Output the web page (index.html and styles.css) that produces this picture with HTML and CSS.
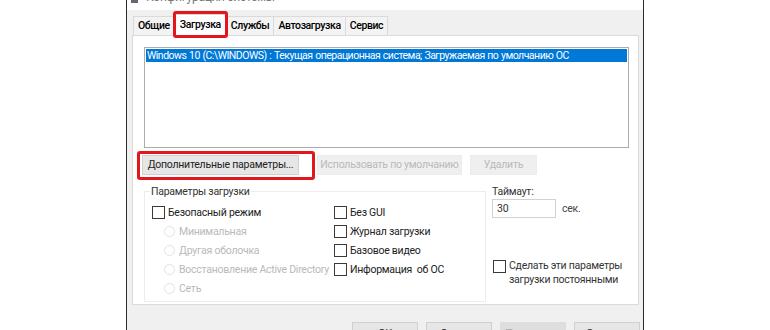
FILE: index.html
```html
<!DOCTYPE html>
<html lang="ru">
<head>
<meta charset="utf-8">
<title>Конфигурация системы</title>
<link rel="stylesheet" href="styles.css">
</head>
<body>
<div class="window">
  <div class="titlebar">
    <span class="ticon"></span>
    <span class="ttext">Конфигурация системы</span>
  </div>
  <div class="tabs">
    <div class="tab">Общие</div>
    <div class="tab active">Загрузка<span class="mark mark-tab"></span></div>
    <div class="tab">Службы</div>
    <div class="tab">Автозагрузка</div>
    <div class="tab">Сервис</div>
  </div>
  <div class="panel">
    <div class="listbox">
      <div class="selrow">Windows 10 (C:\WINDOWS) : Текущая операционная система; Загружаемая по умолчанию ОС</div>
    </div>
    <div class="btnrow">
      <div class="btn btn-adv">Дополнительные параметры...<span class="mark mark-btn"></span></div>
      <div class="btn btn-def disabled">Использовать по умолчанию</div>
      <div class="btn btn-del disabled">Удалить</div>
    </div>
    <div class="lower">
      <fieldset class="group">
        <legend>Параметры загрузки</legend>
        <div class="cols">
          <div class="col1">
            <div class="row"><span class="cb"></span><span>Безопасный режим</span></div>
            <div class="row sub disabled"><span class="rb"></span><span>Минимальная</span></div>
            <div class="row sub disabled"><span class="rb"></span><span>Другая оболочка</span></div>
            <div class="row sub disabled"><span class="rb"></span><span>Восстановление Active Directory</span></div>
            <div class="row sub disabled"><span class="rb"></span><span>Сеть</span></div>
          </div>
          <div class="col2">
            <div class="row"><span class="cb"></span><span>Без GUI</span></div>
            <div class="row"><span class="cb"></span><span>Журнал загрузки</span></div>
            <div class="row"><span class="cb"></span><span>Базовое видео</span></div>
            <div class="row"><span class="cb"></span><span>Информация&nbsp; об ОС</span></div>
          </div>
        </div>
      </fieldset>
      <div class="side">
        <div class="tlabel">Таймаут:</div>
        <div class="trow">
          <div class="tinput">30</div>
          <span class="sec">сек.</span>
        </div>
        <div class="perm">
          <span class="cb"></span>
          <span class="permtext">Сделать эти параметры<br>загрузки постоянными</span>
        </div>
      </div>
    </div>
  </div>
  <div class="footer">
    <div class="fbtn">OK</div>
    <div class="fbtn">Отмена</div>
    <div class="fbtn disabled-f">Применить</div>
    <div class="fbtn">Справка</div>
  </div>
</div>
</body>
</html>
```
FILE: styles.css
```css
* { box-sizing: border-box; }
html, body {
  margin: 0;
  background: #ffffff;
}
body {
  font-family: Roboto, "Liberation Sans", sans-serif;
  font-size: 10.5px;
  letter-spacing: -0.25px;
  color: #222;
}
.window {
  margin-left: 126px;
  width: 518px;
  height: 330px;
  border-left: 1px solid #2b2b2b;
  border-right: 1px solid #2b2b2b;
  background: #f0f0f0;
  overflow: hidden;
  display: flex;
  flex-direction: column;
}
.titlebar {
  height: 10px;
  background: #ffffff;
  overflow: hidden;
  display: flex;
  align-items: flex-end;
  gap: 8px;
  padding-left: 4px;
  flex-shrink: 0;
}
.ticon {
  width: 7px;
  height: 3px;
  background: #667;
  margin-bottom: 7px;
}
.ttext {
  font-size: 12px;
  line-height: 12px;
  color: #777;
  margin-bottom: 7px;
}
.tabs {
  height: 25px;
  display: flex;
  align-items: flex-end;
  padding-left: 6px;
  flex-shrink: 0;
}
.tab {
  position: relative;
  height: 19px;
  line-height: 18px;
  padding: 0 4px;
  border: 1px solid #dadada;
  border-bottom: none;
  margin-right: -1px;
  background: #f3f3f3;
  color: #000;
  font-size: 10.5px;
  font-weight: 500;
  letter-spacing: -0.4px;
}
.tab.active {
  height: 22px;
  line-height: 20px;
  background: #ffffff;
  margin-bottom: -1px;
  z-index: 2;
  padding: 0 5px;
}
.mark {
  position: absolute;
  border: 3px solid #e3161b;
  border-radius: 3px;
  pointer-events: none;
}
.mark-tab {
  left: -2px;
  right: -2px;
  top: -4px;
  bottom: -2px;
}
.panel {
  margin: 0 4px 0 5px;
  height: 270px;
  background: #ffffff;
  border: 1px solid #dadada;
  flex-shrink: 0;
  padding: 11px 9px 0 11px;
}
.listbox {
  height: 101px;
  border: 1px solid #acacac;
  padding: 1px;
}
.selrow {
  background: #0078d7;
  color: #ffffff;
  height: 13px;
  line-height: 13px;
  padding-left: 1px;
  font-size: 10.5px;
  letter-spacing: -0.5px;
  word-spacing: 0.5px;
  white-space: nowrap;
  overflow: hidden;
}
.btnrow {
  display: flex;
  margin-top: 7px;
}
.btn {
  position: relative;
  height: 20px;
  line-height: 18px;
  border: 1px solid #d0d0d0;
  background: #e6e6e6;
  text-align: center;
  color: #222;
  white-space: nowrap;
  flex-shrink: 0;
}
.btn-adv { width: 157px; margin-left: -2px; }
.btn-def { width: 145px; margin-left: 18px; }
.btn-del { width: 67px; margin-left: 8px; }
.btn.disabled {
  background: #efefef;
  border-color: #ececec;
  color: #b9b9b9;
}
.mark-btn {
  left: -6px;
  top: -5px;
  width: 178px;
  height: 29px;
}
.lower {
  display: flex;
  margin-top: 9px;
}
.group {
  margin: 0;
  width: 342px;
  min-width: 342px;
  flex-shrink: 0;
  height: 118px;
  border: 1px solid #ededed;
  padding: 4px 0 0 7px;
}
.group legend {
  padding: 0 1px;
  margin-left: -2px;
  color: #333;
  line-height: 15px;
}
.cols {
  display: flex;
}
.col1 { width: 182px; flex-shrink: 0; }
.row {
  height: 19px;
  display: flex;
  align-items: center;
  gap: 3px;
  white-space: nowrap;
  color: #222;
}
.row.sub {
  padding-left: 12px;
  gap: 4px;
}
.row.disabled { color: #b9b9b9; }
.cb {
  width: 13px;
  height: 13px;
  border: 1px solid #3a3a3a;
  background: #fff;
  flex-shrink: 0;
}
.rb {
  width: 11px;
  height: 11px;
  border: 1px solid #e2e2e2;
  border-radius: 50%;
  flex-shrink: 0;
}
.side {
  margin-left: 6px;
  display: flex;
  flex-direction: column;
  white-space: nowrap;
}
.tlabel {
  line-height: 15px;
  color: #333;
}
.trow {
  display: flex;
  align-items: center;
}
.tinput {
  width: 64px;
  height: 19px;
  border: 1px solid #d2d2d2;
  line-height: 17px;
  padding-left: 4px;
  color: #333;
}
.sec {
  margin-left: 6px;
  color: #444;
}
.perm {
  display: flex;
  align-items: flex-start;
  gap: 3px;
  margin-top: 41px;
  margin-left: 1px;
}
.perm .cb { margin-top: 1px; }
.permtext {
  line-height: 14px;
  color: #333;
}
.footer {
  display: flex;
  justify-content: flex-end;
  gap: 8px;
  padding: 17px 3px 0 0;
}
.fbtn {
  width: 66px;
  height: 23px;
  line-height: 21px;
  border: 1px solid #d0d0d0;
  background: #e6e6e6;
  text-align: center;
  color: #333;
  font-size: 11px;
}
.fbtn.disabled-f {
  background: #dedede;
  border-color: #dedede;
  color: #aaa;
}
```
